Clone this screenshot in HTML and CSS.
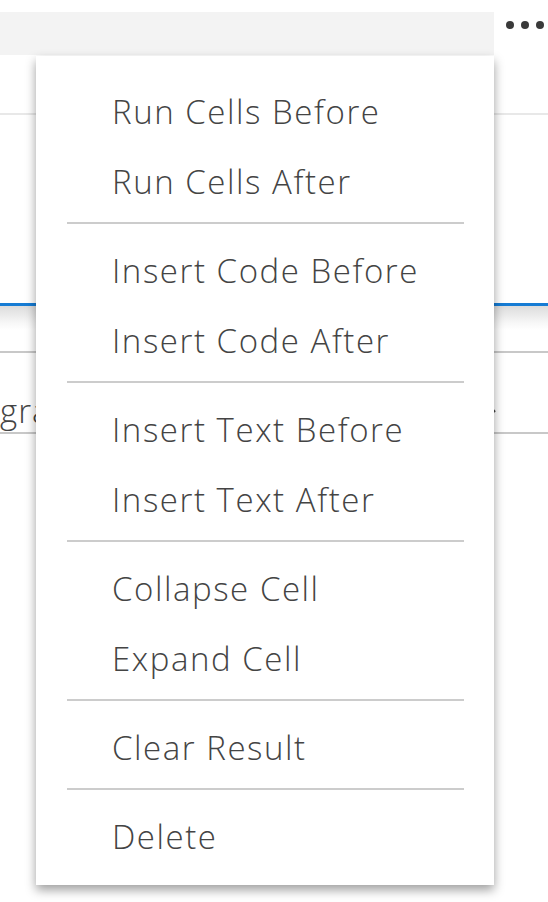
FILE: index.html
```html
<!DOCTYPE html>
<html lang="en">
<head>
<meta charset="utf-8">
<title>Cell menu</title>
<link rel="stylesheet" href="styles.css">
</head>
<body>
<div class="page">
  <div class="toolbar">
    <div class="toolbar-fill"></div>
    <div class="more" aria-label="More actions">
      <span class="dot"></span><span class="dot"></span><span class="dot"></span>
    </div>
  </div>
  <div class="rule-light"></div>
  <div class="cell"></div>
  <div class="cell-shadow"></div>
  <div class="rule-mid"></div>
  <div class="input-row">
    <span class="input-text">gra</span>
    <svg class="chevron" width="20" height="16" viewBox="0 0 20 16"><path d="M2 13 L8 6 L14 13" fill="none" stroke="#444" stroke-width="2"/></svg>
  </div>

  <div class="menu" role="menu">
    <div class="item">Run Cells Before</div>
    <div class="item">Run Cells After</div>
    <div class="sep"></div>
    <div class="item">Insert Code Before</div>
    <div class="item">Insert Code After</div>
    <div class="sep"></div>
    <div class="item">Insert Text Before</div>
    <div class="item">Insert Text After</div>
    <div class="sep"></div>
    <div class="item">Collapse Cell</div>
    <div class="item">Expand Cell</div>
    <div class="sep"></div>
    <div class="item">Clear Result</div>
    <div class="sep"></div>
    <div class="item">Delete</div>
  </div>
</div>
</body>
</html>
```
FILE: styles.css
```css
html, body {
  margin: 0;
  padding: 0;
  background: #ffffff;
}
body {
  font-family: "Open Sans", "Noto Sans", "DejaVu Sans", sans-serif;
  color: #444444;
}
.page {
  position: relative;
  width: 548px;
  height: 902px;
  overflow: hidden;
}
.toolbar {
  display: flex;
  margin-top: 12px;
  height: 43px;
}
.toolbar-fill {
  width: 494px;
  background: #f3f3f3;
}
.more {
  display: flex;
  gap: 7px;
  padding: 9px 0 0 12px;
}
.dot {
  width: 8px;
  height: 8px;
  border-radius: 50%;
  background: #3a3a3a;
}
.rule-light {
  margin-top: 58px;
  height: 2px;
  background: #e8e8e8;
}
.cell {
  height: 188px;
  border-bottom: 3px solid #167cd4;
}
.cell-shadow {
  height: 24px;
  background: linear-gradient(#dcdcdc, #f7f7f7 70%, #ffffff);
}
.rule-mid {
  margin-top: 21px;
  height: 2px;
  background: #c8c8c8;
}
.input-row {
  display: flex;
  align-items: flex-start;
  justify-content: space-between;
  height: 79px;
  border-bottom: 2px solid #c8c8c8;
}
.input-text {
  font-size: 33px;
  font-weight: 350;
  letter-spacing: 1px;
  line-height: 44px;
  margin-top: 36px;
  margin-left: 0;
  color: #444;
}
.chevron {
  margin-top: 46px;
  margin-right: 47px;
}
.menu {
  position: absolute;
  left: 36px;
  top: 56px;
  width: 458px;
  padding: 21px 0 13px;
  background: #ffffff;
  box-shadow: 0 5px 10px rgba(0, 0, 0, 0.38);
}
.item {
  height: 70px;
  line-height: 70px;
  padding-left: 76px;
  font-size: 33px;
  font-weight: 350;
  letter-spacing: 1.55px;
  color: #444444;
  white-space: nowrap;
}
.sep {
  height: 2px;
  margin: 5px 30px 12px 31px;
  background: #cccccc;
}
```
